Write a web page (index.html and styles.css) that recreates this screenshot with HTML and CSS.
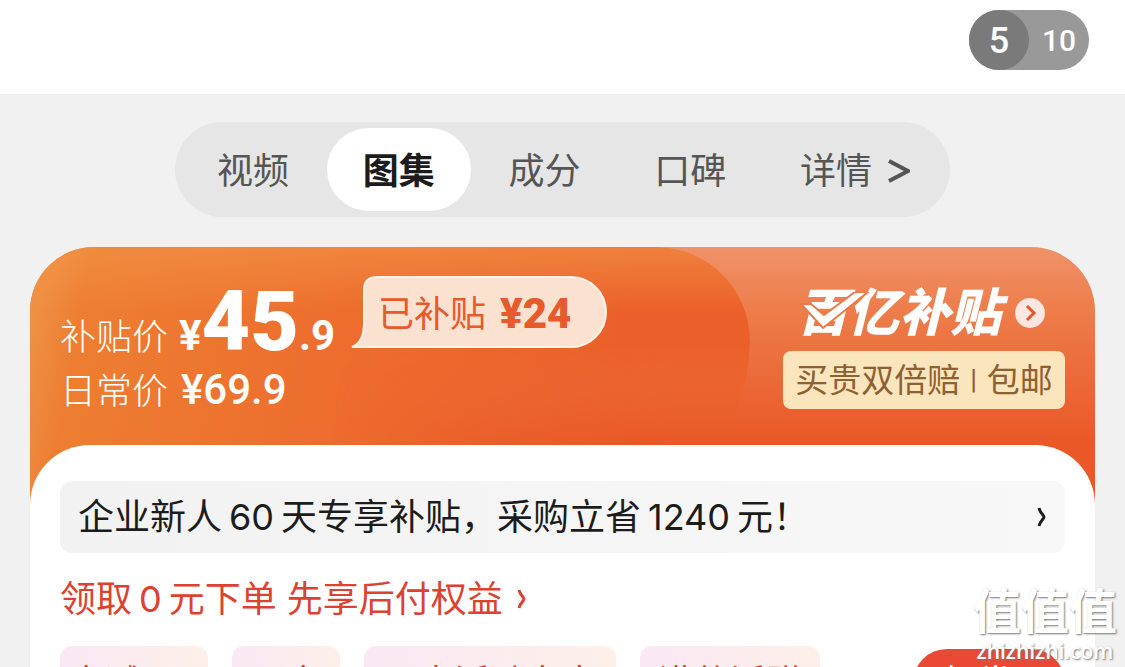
FILE: index.html
```html
<!DOCTYPE html>
<html lang="zh-CN">
<head>
<meta charset="utf-8">
<meta name="viewport" content="width=device-width, initial-scale=1">
<title>百亿补贴</title>
<link rel="stylesheet" href="styles.css">
</head>
<body>
<header class="gallery">
  <div class="counter"><span class="counter-now">5</span><span class="counter-all">10</span></div>
</header>
<main class="page">
  <nav class="tabs">
    <a class="tab" href="#video">视频</a>
    <a class="tab tab-active" href="#gallery">图集</a>
    <a class="tab" href="#ingredients">成分</a>
    <a class="tab" href="#reviews">口碑</a>
    <a class="tab tab-more" href="#details">详情
      <svg class="tab-arrow" viewBox="0 0 22 26" aria-hidden="true"><path d="M1 3 20 13 1 23" fill="none" stroke="currentColor" stroke-width="4"/></svg>
    </a>
  </nav>
  <section class="card">
    <div class="banner">
      <div class="prices">
        <div class="price-row">
          <span class="price-label">补贴价</span>
          <span class="price"><span class="price-sign">¥</span><span class="price-int">45</span><span class="price-dec">.9</span></span>
        </div>
        <div class="daily-row"><span class="price-label">日常价</span><span class="daily">¥69.9</span></div>
      </div>
      <div class="bubble">
        <svg class="bubble-shape" viewBox="0 0 258 74" preserveAspectRatio="none" aria-hidden="true"><path d="M2 72C12 68 14 58 14 48V15Q14 2 27 2H221A35 35 0 0 1 221 72Z" fill="#fae1d0" stroke="#fff3e6" stroke-width="2"/></svg>
        <span class="bubble-text">已补贴</span><span class="bubble-price">¥24</span>
      </div>
      <div class="promo">
        <a class="promo-title" href="#subsidy">
          <span class="promo-logo">百亿补贴
            <svg class="promo-check" viewBox="0 0 70 42" aria-hidden="true"><path d="M2 12H12L25 23 56 0H69L24 36Z" fill="#fff" stroke="#ed7847" stroke-width="2"/></svg>
          </span>
          <svg class="promo-go" viewBox="0 0 30 30" aria-hidden="true"><circle cx="15" cy="15" r="15" fill="#ffe6e0"/><path d="M12 8 19 15 12 22" fill="none" stroke="#e4562b" stroke-width="3"/></svg>
        </a>
        <div class="promo-tag"><span>买贵双倍赔</span><span class="promo-line">|</span><span>包邮</span></div>
      </div>
    </div>
    <div class="panel">
      <a class="notice" href="#business"><span>企业新人<span class="num">60</span>天专享补贴，采购立省<span class="num">1240</span>元！</span>
        <svg class="chevron" viewBox="0 0 10 20" aria-hidden="true"><path d="M2 1C3 6 7 8 7 10S3 14 2 19" fill="none" stroke="currentColor" stroke-width="3"/></svg>
      </a>
      <a class="benefit" href="#benefit"><span>领取<span class="num">0</span>元下单 先享后付权益</span>
        <svg class="chevron" viewBox="0 0 10 20" aria-hidden="true"><path d="M2 1C3 6 7 8 7 10S3 14 2 19" fill="none" stroke="currentColor" stroke-width="3"/></svg>
      </a>
      <div class="coupons">
        <span class="chip chip-wide">立减5元</span>
        <span class="chip">买家</span>
        <span class="chip">日本活动专享</span>
        <span class="chip">满件活赠</span>
        <button class="claim" type="button">领券 ›</button>
      </div>
    </div>
  </section>
</main>
<div class="watermark"><span class="watermark-name">值值值</span><span class="watermark-site">zhizhizhi.com</span></div>
</body>
</html>
```
FILE: styles.css
```css
* { box-sizing: border-box; }
body {
  margin: 0;
  height: 100vh;
  overflow: hidden;
  position: relative;
  background: #f1f1f1;
  color: #1c1c1c;
  font: 36px/48px Inter, "Noto Sans CJK SC", sans-serif;
}
a { color: inherit; text-decoration: none; }
.gallery {
  display: flex;
  justify-content: flex-end;
  height: 94px;
  padding: 10px 36px;
  background: #fff;
}
.counter {
  display: flex;
  width: 120px;
  height: 60px;
  border-radius: 30px;
  background: #999;
  color: #fff;
  font-family: Roboto, sans-serif;
  font-weight: 500;
  line-height: 62px;
  text-align: center;
}
.counter-now { width: 60px; border-radius: 30px; background: #7a7a7a; }
.counter-all { flex: 1; font-size: 30px; }
.page { padding: 28px 30px 0; }
.tabs {
  display: flex;
  justify-content: space-between;
  margin: 0 145px 30px;
  padding: 6px;
  border-radius: 48px;
  background: #e6e6e6;
  color: #555;
}
.tab { padding: 19px 36px 16px; }
.tab-active { border-radius: 42px; background: #fff; color: #1c1c1c; font-weight: 700; }
.tab-more { display: flex; align-items: center; gap: 16px; padding-right: 34px; }
.tab-arrow { width: 22px; height: 26px; }
.card {
  border-radius: 64px 64px 0 0;
  overflow: hidden;
  background: linear-gradient(180deg, #f09268 0, #ed7b48 70px, #eb6d3b 120px, #e95826 198px);
}
.banner {
  position: relative;
  display: flex;
  justify-content: space-between;
  height: 198px;
  padding: 33px 30px 0;
}
.banner::before {
  content: "";
  position: absolute;
  left: 0;
  top: 0;
  width: 720px;
  height: 270px;
  border-radius: 0 96px 180px 0;
  background:
    linear-gradient(180deg, rgba(242, 150, 72, .6), transparent 64px),
    linear-gradient(100deg, #f0964a 0, #ed7e31 60px, #ed6c2e 330px, #eb602a 600px);
  -webkit-mask: linear-gradient(180deg, #000 100px, transparent 190px), linear-gradient(90deg, #000 300px, transparent 640px);
}
.prices { position: relative; color: #fff; }
.price-row, .daily-row { display: flex; align-items: baseline; }
.price-row { gap: 11px; height: 84px; line-height: 84px; }
.daily-row { gap: 13px; margin-top: 2px; }
.price-label { font-weight: 300; }
.price { display: flex; align-items: baseline; font-family: Roboto, sans-serif; font-weight: 700; }
.price-sign { font-size: 42px; }
.price-int { font-size: 84px; font-weight: 900; }
.price-dec, .daily { font-size: 42px; }
.daily { font-family: Roboto, sans-serif; font-weight: 500; }
.bubble {
  position: absolute;
  left: 320px;
  top: 28px;
  width: 258px;
  height: 74px;
  display: flex;
  align-items: center;
  gap: 14px;
  padding: 4px 0 0 28px;
  color: #e65a2b;
}
.bubble-shape { position: absolute; left: 0; top: 0; width: 100%; height: 100%; }
.bubble-text, .bubble-price { position: relative; }
.bubble-price { font-family: Roboto, sans-serif; font-size: 42px; font-weight: 900; }
.promo { position: relative; width: 282px; color: #fff; }
.promo-title { display: flex; align-items: center; gap: 14px; height: 64px; padding: 2px 0 0 14px; }
.promo-logo { position: relative; font-size: 51px; font-weight: 900; font-style: italic; white-space: nowrap; }
.promo-check { position: absolute; left: 2px; top: 3px; width: 70px; height: 42px; }
.promo-go { width: 30px; height: 30px; }
.promo-tag {
  display: flex;
  align-items: center;
  justify-content: center;
  gap: 10px;
  margin-top: 7px;
  border-radius: 8px;
  background: #fae5bd;
  color: #8f6030;
  font-size: 33px;
  line-height: 58px;
  white-space: nowrap;
}
.promo-line { font: 500 27px/58px Roboto, sans-serif; }
.panel {
  position: relative;
  padding: 36px 30px 0;
  border-radius: 60px 60px 0 0;
  background: #fff;
}
.notice {
  display: flex;
  align-items: center;
  justify-content: space-between;
  height: 72px;
  padding: 0 18px;
  border-radius: 12px;
  background: linear-gradient(90deg, #f2f2f2, #f8f8f8);
}
.num { margin: 0 7px; }
.chevron { width: 10px; height: 20px; flex: none; }
.benefit { display: flex; align-items: center; gap: 14px; margin: 22px 0 23px; color: #db4232; }
.coupons { display: flex; align-items: flex-start; gap: 24px; white-space: nowrap; }
.chip {
  height: 72px;
  padding: 13px 18px 0;
  border-radius: 12px;
  background: linear-gradient(90deg, #fae8f5, #fdf0e8);
  color: #db4232;
}
.chip-wide { padding: 13px 9px 0; }
.claim {
  margin: 3px 0 0 auto;
  padding: 10px 28px;
  border: 0;
  border-radius: 36px;
  background: #ea4936;
  color: #fff;
  font: inherit;
}
.watermark {
  position: absolute;
  right: 8px;
  bottom: 4px;
  display: flex;
  flex-direction: column;
  align-items: center;
  color: #fff;
  text-shadow: 1px 1px 2px #777;
  white-space: nowrap;
}
.watermark-name { font-size: 48px; font-weight: 700; line-height: 54px; }
.watermark-site { font: 600 21px/24px "Open Sans", sans-serif; }
```
